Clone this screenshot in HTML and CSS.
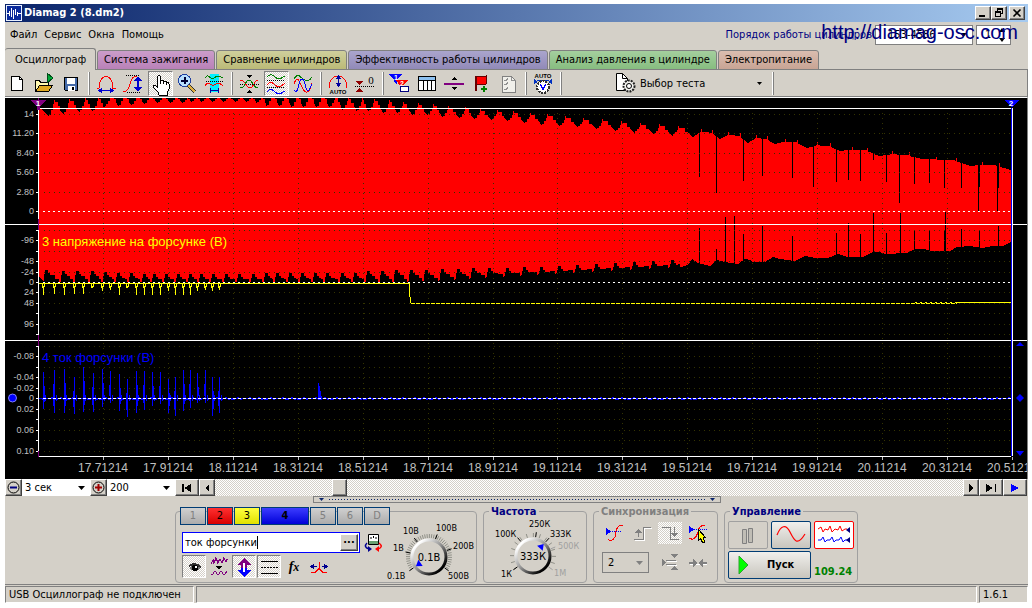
FILE: index.html
```html
<!DOCTYPE html>
<html lang="ru">
<head>
<meta charset="utf-8">
<title>Diamag 2 (8.dm2)</title>
<link rel="stylesheet" href="styles.css">
</head>
<body>
<div class="app">
  <header class="titlebar">
    <svg class="logo" viewBox="0 0 16 16" width="16" height="16"><rect width="16" height="16" fill="#e8f0ff"/><rect x="1" y="1" width="14" height="14" fill="#0a2a9c"/><path d="M1 8.500h2M3.500 6v5M5.500 3v9M7.500 5v9M9.500 4v6M11.500 7v4M12 8.500h3" fill="none" stroke="#fff"/></svg>
    <h1 class="title">Diamag 2 (8.dm2)</h1>
    <div class="winbuttons">
      <button class="win" aria-label="Свернуть"><svg viewBox="0 0 12 10" width="12" height="10"><path d="M2 7h6v2H2z"/></svg></button>
      <button class="win" aria-label="Восстановить"><svg viewBox="0 0 12 10" width="12" height="10"><path d="M4 0h6v6H8V5h1V2H5v1H4zM2 3h6v6H2zM3 5v3h4V5z" fill-rule="evenodd"/></svg></button>
      <button class="win win-close" aria-label="Закрыть"><svg viewBox="0 0 12 10" width="12" height="10"><path d="M2.500 1.500l7 7M9.500 1.500l-7 7" stroke="#000" stroke-width="1.600"/></svg></button>
    </div>
  </header>

  <div class="menurow">
    <nav class="menu"><button>Файл</button><button>Сервис</button><button>Окна</button><button>Помощь</button></nav>
    <div class="order">
      <label for="order">Порядок работы цилиндров</label>
      <span class="combo order-combo"><select id="order"><option>153-4586</option></select><svg viewBox="0 0 7 4" width="7" height="4"><path d="M0 0h7L3.500 4z"/></svg></span>
      <span class="combo spin"><input type="text" value="1" aria-label="Цилиндр"><svg viewBox="0 0 6 14" width="6" height="14"><path d="M3 0l3 4H0zM0 10h6l-3 4z"/></svg></span>
    </div>
    <span class="watermark">http://diamag-osc.com</span>
  </div>

  <div class="tabs" role="tablist">
    <button class="tab tab-active" role="tab">Осциллограф</button>
    <button class="tab tab-ignition" role="tab">Система зажигания</button>
    <button class="tab tab-compare" role="tab">Сравнение цилиндров</button>
    <button class="tab tab-power" role="tab">Эффективность работы цилиндров</button>
    <button class="tab tab-pressure" role="tab">Анализ давления в цилиндре</button>
    <button class="tab tab-supply" role="tab">Электропитание</button>
  </div>

  <div class="toolbar">
    <button class="tool" aria-label="Новый"><svg viewBox="0 0 24 24"><path d="M6.500 4.500h8l3 3v11h-11z" fill="#fff" stroke="#000"/><path d="M14.500 4.500v3h3" fill="none" stroke="#000"/></svg></button>
    <button class="tool" aria-label="Открыть"><svg viewBox="0 0 24 24"><path d="M3.500 19.500v-11h4l1 2h8v4" fill="#fff8b0" stroke="#000"/><path d="M3.500 19.500l4-6h13l-4 6z" fill="#e0a820" stroke="#000"/><path d="M15 1l6 5-6 5z" fill="#00a838" stroke="#004c18"/></svg></button>
    <button class="tool" aria-label="Сохранить"><svg viewBox="0 0 24 24"><path d="M5.500 5.500h13v13h-12l-1-1z" fill="#456aa8" stroke="#000"/><path d="M8 6h8v6H8zM9 14h7v5H9z" fill="#fff"/><path d="M13 15h2v3h-2z"/></svg></button>
    <i class="sep"></i>
    <button class="tool" aria-label="Период"><svg viewBox="0 0 24 24"><path d="M3 16.500h2C5 9 8 4.500 12 4.500s7 4.500 7 12h3" fill="none" stroke="red"/><path d="M6 18.500h12" stroke="#0000d0"/><path d="M4 18.500l4-3v6zM20 18.500l-4-3v6z" fill="#0000d0"/></svg></button>
    <button class="tool" aria-label="Амплитуда"><svg viewBox="0 0 24 24"><path d="M2 19.500c9 1 5-14 12-15 3 0 4 1 5 3" fill="none" stroke="red"/><path d="M5 3.500h14M6 20.500h14" stroke="#000" stroke-dasharray="1 1"/><path d="M17 8v9" stroke="#0000d0" stroke-width="2"/><path d="M17 4l4 5h-8zM17 20l4-5h-8z" fill="#0000d0"/></svg></button>
    <button class="tool pressed" aria-label="Рука"><svg viewBox="0 0 24 24"><path d="M9.500 15V5q1.500-3 3 0v7-3q1.500-1.500 3 0v3-2q1.500-1.500 3 0v3-2q2-1 2.500 1v5l-2 4v2h-8l-1-3-5-5q0-3 3-1z" fill="#fff" stroke="#000"/></svg></button>
    <button class="tool" aria-label="Масштаб"><svg viewBox="0 0 24 24"><path d="M13 13l7 7" stroke="#303030" stroke-width="4"/><path d="M13 13l7 7" stroke="#e0b040" stroke-width="2"/><circle cx="9.500" cy="8.500" r="6" fill="#b8e0ff" stroke="#2040a0"/><path d="M6 8.500h7M9.500 5v7" stroke="#003" stroke-width="2"/></svg></button>
    <button class="tool" aria-label="Участок"><svg viewBox="0 0 24 24"><path d="M8 2h9v18H8z" fill="#0ef"/><path d="M3 6c4-6 5 3 9 0s5-2 9 0" fill="none" stroke="#008000"/><path d="M4 9.500h17" stroke="#000" stroke-dasharray="1 1"/><path d="M3 14c4-7 6 1 9-1s5-3 9 1" fill="none" stroke="red"/><path d="M8 18.500h9M8.500 16v5M16.500 16v5" stroke="#0000a0"/></svg></button>
    <i class="sep"></i>
    <button class="tool" aria-label="Совместить"><svg viewBox="0 0 24 24"><path d="M9 3h6l-3 3zM9 21h6l-3-3z"/><path d="M3 12.500h19" stroke="#000" stroke-dasharray="1 1"/><path d="M3 8c6 0 6 8 10 8s3-7 8-8" fill="none" stroke="red"/><path d="M3 16c6 0 5-8 9-8s4 8 9 8" fill="none" stroke="#008000"/></svg></button>
    <button class="tool pressed" aria-label="Раздельно"><svg viewBox="0 0 24 24"><path d="M3 5c3-3 5-3 8 0s6 2 10-1" fill="none" stroke="#008000"/><path d="M3 8.500h18M3 15.500h18" stroke="#000" stroke-dasharray="1 1"/><path d="M3 13c3-4 5-3 8 0s6 2 10-2" fill="none" stroke="red"/><path d="M3 20c3-4 5-3 8 0s6 2 10-1" fill="none" stroke="#00f"/></svg></button>
    <button class="tool" aria-label="Наложить"><svg viewBox="0 0 24 24"><path d="M3 7c4-7 6-2 9 0s6 3 9-2" fill="none" stroke="#008000"/><path d="M3 12c3-9 5-4 8 3s7 8 10-4" fill="none" stroke="red"/><path d="M3 18c5 6 4-11 8-11s3 15 7 11l3-6" fill="none" stroke="#00f"/></svg></button>
    <i class="sep"></i>
    <button class="tool" aria-label="Авто"><svg viewBox="0 0 24 24"><path d="M3 16c0-16 18-16 18 0" fill="none" stroke="red"/><path d="M12.500 6v7" stroke="#0000a0"/><path d="M12.500 3l3 4h-6zM12.500 15l3-4h-6z" fill="#0000a0"/><text class="tiny" x="12" y="22">AUTO</text></svg></button>
    <button class="tool" aria-label="Ноль"><svg viewBox="0 0 24 24"><path d="M2 9h8l-4 4zM2 20h8l-4-4z" fill="#900000"/><path d="M2 14.500h19" stroke="#000" stroke-dasharray="1 1"/><text class="zero" x="18" y="12">0</text></svg></button>
    <i class="sep"></i>
    <button class="tool" aria-label="Маркеры"><svg viewBox="0 0 24 24"><path d="M1 2h13l-5 6v5l-3-3V8z" fill="#00f"/><path d="M8 8h12l-5 6v5l-2-4z" fill="red"/><text class="num" x="8" y="8">1</text><text class="num" x="14" y="14">2</text><path d="M12.500 14.500h8v5h-8z" fill="#fff" stroke="#000080"/></svg></button>
    <button class="tool" aria-label="Таблица"><svg viewBox="0 0 24 24"><path d="M3.500 4.500h17v14h-17z" fill="#fff" stroke="#000"/><path d="M4 5h16v3H4z" fill="#8cc0f0"/><path d="M3 8.500h18M8.500 8v10M12.500 8v10M16.500 8v10" stroke="#000"/></svg></button>
    <button class="tool" aria-label="Уровень"><svg viewBox="0 0 24 24"><path d="M9 8h6l-3-3zM9 15h6l-3 3z"/><path d="M2 12h20" stroke="#800080" stroke-width="2"/></svg></button>
    <button class="tool" aria-label="Добавить метку"><svg viewBox="0 0 24 24"><path d="M6.500 4v15" stroke="#600" stroke-width="2"/><path d="M7 5l4-1 3 1 3-1v8l-3 1-3-1-4 1z" fill="#f00" stroke="#600"/><path d="M15 14v6M12 17h6" stroke="#008000" stroke-width="2"/></svg></button>
    <button class="tool" aria-label="Список"><svg viewBox="0 0 24 24"><path d="M6.500 4.500h9l4 4v12h-13z" fill="#f0efea" stroke="#808080"/><path d="M15.500 4.500v4h4M8 8l2 1 2-3M8 12l2 1 2-3M8 17l2 1 2-3" fill="none" stroke="#909090"/></svg></button>
    <i class="sep"></i>
    <button class="tool" aria-label="Авто напряжение"><svg viewBox="0 0 24 24"><text class="tiny" x="12" y="6">AUTO</text><path d="M6 8.500h12" fill="none" stroke="#0030c0"/><path d="M3 7v5l4-2zM21 7v5l-4-2z" fill="#0030c0"/><circle cx="12" cy="15" r="6" fill="#fff" stroke="#303030" stroke-width="2" stroke-dasharray="2 1"/><path d="M9.500 12.500l2.500 5 2.500-5" fill="none" stroke="#00f"/></svg></button>
    <i class="sep"></i>
    <button class="testpick"><svg viewBox="0 0 24 24" width="24" height="24"><path d="M3.500 1.500h6l5 5v12h-11z" fill="#fff" stroke="#000"/><path d="M9.500 1.500v5h5" fill="none" stroke="#000"/><circle cx="16" cy="14" r="5.500" fill="#f4f4f0" stroke="#202020" stroke-width="2" stroke-dasharray="2 1"/><circle cx="16" cy="14" r="2.500" fill="#fff" stroke="#000"/></svg><span>Выбор теста</span><svg viewBox="0 0 5 3" width="5" height="3"><path d="M0 0h5L2.500 3z"/></svg></button>
    <i class="sep"></i>
  </div>

  <svg class="chart" id="chart" viewBox="5 98 1022 381" role="img" aria-label="Осциллограмма"></svg>

  <div class="scrollrow">
    <button class="sb sb-zoom" aria-label="Сжать"><svg class="smooth" viewBox="0 0 13 13" width="13" height="13"><circle cx="6.500" cy="6.500" r="5.500" fill="none" stroke="#000"/><path d="M3 6.500h7" stroke="#000080" stroke-width="2"/></svg></button>
    <span class="combo sweep"><select aria-label="Развёртка"><option>3 сек</option></select><svg viewBox="0 0 7 4" width="7" height="4"><path d="M0 0h7L3.500 4z"/></svg></span>
    <button class="sb sb-zoom" aria-label="Растянуть"><svg class="smooth" viewBox="0 0 13 13" width="13" height="13"><circle cx="6.500" cy="6.500" r="5.500" fill="none" stroke="#000"/><path d="M3 6.500h7M6.500 3v7" stroke="#a00000" stroke-width="2"/></svg></button>
    <span class="combo sweep"><select aria-label="Масштаб"><option>200</option></select><svg viewBox="0 0 7 4" width="7" height="4"><path d="M0 0h7L3.500 4z"/></svg></span>
    <button class="sb sb-wide" aria-label="В начало"><svg viewBox="0 0 12 8" width="12" height="8"><path d="M1 0h2v8H1zM3 4l7-4v8z"/></svg></button>
    <button class="sb" aria-label="Назад"><svg viewBox="0 0 4 8" width="4" height="8"><path d="M4 0v8L0 4z"/></svg></button>
    <input class="scroll" type="range" min="0" max="100" value="16" aria-label="Прокрутка">
    <button class="sb" aria-label="Вперёд"><svg viewBox="0 0 4 8" width="4" height="8"><path d="M0 0v8l4-4z"/></svg></button>
    <button class="sb sb-wide" aria-label="В конец"><svg viewBox="0 0 12 8" width="12" height="8"><path d="M10 0h1v8h-1zM8 4L1 0v8z"/></svg></button>
    <button class="sb sb-wide" aria-label="Воспроизвести"><svg viewBox="0 0 8 8" width="8" height="8"><path d="M0 0v8l8-4z" fill="#00f"/></svg></button>
  </div>

  <button class="splitter" aria-label="Свернуть панель"><svg viewBox="0 0 5 3" width="5" height="3"><path d="M0 0h5L2.500 3z" fill="#0a246a"/></svg><i class="dots"></i><svg viewBox="0 0 5 3" width="5" height="3"><path d="M0 0h5L2.500 3z" fill="#0a246a"/></svg></button>

  <div class="panel">
    <fieldset class="group channels" aria-label="Канал">
      <div class="chanrow">
        <button class="chan">1</button><button class="chan chan-red">2</button><button class="chan chan-yellow">3</button><button class="chan chan-blue">4</button><button class="chan">5</button><button class="chan">6</button><button class="chan">D</button>
      </div>
      <div class="chanbody">
        <div class="chanleft">
          <div class="namerow">
            <span class="namebox"><input type="text" value="ток форсунки" aria-label="Название канала"><i class="caret"></i><button class="more" aria-label="Выбрать">···</button></span>
            <button class="flat" aria-label="Датчик"><svg viewBox="0 0 20 20" width="20" height="20"><path d="M5.500 1.500h10v10h-10z" fill="#fff" stroke="#000"/><path d="M6 8h9v3H6z" fill="#68a070"/><path d="M8 6V4M10.500 5V3M13 6V4" stroke="#000"/><path d="M4 10q-4 4 2 6" fill="none" stroke="#000090" stroke-width="1.500"/><path d="M5 13v6l4-3z" fill="#000090"/><path d="M16 10q5 4-1 6" fill="none" stroke="red" stroke-width="1.500"/><path d="M16 13v6l-4-3z" fill="red"/></svg></button>
          </div>
          <div class="togglerow">
            <button class="toggle pressed" aria-label="Показать"><svg viewBox="0 0 24 22"><path d="M7 12q6-6 12 0-5 6-12 0z" fill="#777"/><path d="M7 10q6-4 12 1" fill="none" stroke="#303030" stroke-width="2"/><circle cx="13" cy="12" r="3"/><circle cx="14" cy="11" r="1" fill="#fff"/></svg></button>
            <button class="toggle" aria-label="Сглаживание"><svg viewBox="0 0 24 22"><path d="M4 8l2-4 1 3 2-5 2 5 2-4 2 4 2-5 2 4 1-3" fill="none" stroke="#800080" stroke-width="1.300"/><path d="M9 10h6l-3 4z"/><path d="M4 18h2q2-5 4 0h2q2-5 4 0h2q1-4 2-1" fill="none" stroke="#800080"/></svg></button>
            <button class="toggle pressed" aria-label="Инверсия"><svg viewBox="0 0 24 22"><path d="M12 2l7 7h-4v3H9V9H5z" fill="#800080"/><path d="M12 21l7-7h-4v-2H9v2H5z" fill="#00f"/><path d="M12 7v9" stroke="#fff" stroke-width="2"/></svg></button>
            <button class="toggle pressed" aria-label="Смещение"><svg viewBox="0 0 24 22"><path d="M4 5.500h17M4 17.500h17" stroke="#000"/><path d="M4 11.500h17" stroke="#000" stroke-dasharray="2 1"/></svg></button>
            <button class="toggle fx" aria-label="Функция"><i>f<small>x</small></i></button>
            <button class="toggle" aria-label="Фильтр"><svg viewBox="0 0 24 22"><path d="M4 16.500h4l2-2 2-2V6v6.500l2 2 2 2h4" fill="none" stroke="red"/><path d="M6 10.500h4M15 10.500h4" stroke="#000090"/><path d="M3 10.500l4-3v6zM21 10.500l-4-3v6z" fill="#000090"/></svg></button>
          </div>
        </div>
        <svg class="dial dial-volt" id="dial-volt" viewBox="386 520 92 61" width="92" height="61" role="img" aria-label="Диапазон 0.1В"></svg>
      </div>
    </fieldset>

    <fieldset class="group freq">
      <legend>Частота</legend>
      <svg class="dial" id="dial-freq" viewBox="484 517 102 64" width="102" height="64" role="img" aria-label="Частота 333К"></svg>
    </fieldset>

    <fieldset class="group sync">
      <legend class="legend-off">Синхронизация</legend>
      <div class="syncgrid">
        <button class="sync-btn" aria-label="Уровень"><svg viewBox="0 0 24 22"><path d="M6 17q3 4 7-2l1-6q2-7 7-5" fill="none" stroke="red"/><path d="M6 9.500h14" stroke="#00f" stroke-dasharray="1 1"/><path d="M4 6l5 3.500L4 13z" fill="#00f"/></svg></button>
        <button class="sync-btn" aria-label="Фронт"><svg viewBox="0 0 24 22"><path d="M5 18.500h9v-12h8" fill="none" stroke="#fff"/><path d="M4 17.500h9v-12h8M8.500 8v7" fill="none" stroke="#808080"/><path d="M5 11h7L8.500 7z" fill="#808080"/></svg></button>
        <button class="sync-btn checked" aria-label="Спад"><svg viewBox="0 0 24 22"><path d="M4 5.500h8v12h9M16.500 5v8" fill="none" stroke="#808080"/><path d="M13 11h7l-3.500 4z" fill="#808080"/></svg></button>
        <button class="sync-btn" aria-label="Указать"><svg viewBox="0 0 24 22"><path d="M3 16q6 4 9-6 1-7 7-7" fill="none" stroke="red"/><path d="M6 7.500h15" stroke="#00f" stroke-dasharray="1 1"/><path d="M3 4l5 3.500L3 11z" fill="#00f"/><path d="M12.500 7.500v11l2-2 2 4h2l-1-5h2z" fill="#ff0" stroke="#000"/></svg></button>
        <span class="combo sync-combo"><select aria-label="Канал синхронизации"><option>2</option></select><svg viewBox="0 0 7 4" width="7" height="4"><path d="M0 0h7L3.500 4z" fill="#808080"/></svg></span>
        <button class="sync-btn" aria-label="Гистерезис"><svg viewBox="0 0 24 22"><path d="M9 9.500h10M9 13.500h10" stroke="#fff"/><path d="M8 8.500h10M8 12.500h10" stroke="#808080"/><path d="M13 2h7l-3.500 4zM13 18h7l-3.500-4zM4 7l4 3.500L4 14z" fill="#808080"/></svg></button>
        <button class="sync-btn" aria-label="Центр"><svg viewBox="0 0 24 22"><path d="M4 12.500h17" stroke="#fff"/><path d="M3 11h6M15 11h6" stroke="#808080" stroke-width="2"/><path d="M7 7l5 4-5 4zM17 7l-5 4 5 4z" fill="#808080"/></svg></button>
      </div>
    </fieldset>

    <fieldset class="group control">
      <legend>Управление</legend>
      <div class="ctlgrid">
        <button class="ctl ctl-off" aria-label="Пауза"><svg viewBox="0 0 40 28"><path d="M14.500 8.500h4v14h-4zM20.500 7.500h4v14h-4z" fill="#c0bdb5" stroke="#808080"/></svg></button>
        <button class="ctl" aria-label="Один сигнал"><svg viewBox="0 0 40 28"><path d="M6 14C10 4 15 3 19 11s7 15 15 2" fill="none" stroke="red" stroke-width="1.200"/></svg></button>
        <button class="ctl ctl-on" aria-label="Два сигнала"><svg viewBox="0 0 40 28"><path d="M4 8l3-2 2 5 2-3 3 1 2-4 2 6 3-3 3 1 2-4 2 5 3-2h2" fill="none" stroke="red"/><path d="M4 19h3l2-3 2 5 2-2h3l2-3 2 5 2-2h3l2-3 2 5 2-2h2" fill="none" stroke="#00f"/><path d="M36 6v6l-4-3zM36 16v6l-4-3z" fill="#000080"/></svg></button>
        <button class="ctl run"><svg viewBox="0 0 12 20" width="12" height="20"><path d="M1 1v18l9-9z" fill="#0f0" stroke="#30a030"/></svg><span>Пуск</span></button>
        <output class="counter">109.24</output>
      </div>
    </fieldset>
  </div>

  <footer class="status">
    <span class="cell cell-device">USB Осциллограф не подключен</span>
    <span class="cell cell-fill"></span>
    <span class="cell cell-version">1.6.1</span>
  </footer>
</div>
<script src="chart.js"></script>
</body>
</html>
```

FILE: styles.css
```css
* { box-sizing: border-box; }

body {
  margin: 0;
  padding: 4px 4px 5px 5px;
  background: #fff;
  color: #000;
  font: 11px/14px "DejaVu Sans Condensed", "DejaVu Sans", sans-serif;
}

button, input, select {
  margin: 0;
  padding: 0;
  border: 0;
  background: none;
  color: inherit;
  font: inherit;
}

select { appearance: none; }
svg { display: block; }

.app {
  display: flex;
  flex-direction: column;
  background: #d4d0c8;
}

.titlebar {
  display: flex;
  align-items: center;
  gap: 2px;
  height: 18px;
  padding: 0 3px 0 1px;
  background: linear-gradient(90deg, #0a246a, #a6caf0);
}

.title {
  flex: 1;
  margin: 0;
  color: #fff;
  font-size: 11px;
  line-height: 18px;
}

.winbuttons { display: flex; }

.win, .sb, .more {
  display: flex;
  align-items: center;
  justify-content: center;
  border: 1px solid;
  border-color: #fff #404040 #404040 #fff;
  box-shadow: inset -1px -1px #808080;
  background: #d4d0c8;
}

.win { width: 16px; height: 14px; }
.win-close { margin-left: 2px; }

.menurow {
  position: relative;
  display: flex;
  align-items: center;
  justify-content: space-between;
  height: 26px;
  padding: 0 17px 0 5px;
}

.menu { display: flex; gap: 7px; }

.order {
  display: flex;
  align-items: center;
  gap: 3px;
  color: #000080;
}

.combo {
  display: flex;
  align-items: center;
  padding: 0 5px;
  background: #fff;
  color: #000;
}

.combo select, .combo input { flex: 1; min-width: 0; }
.order-combo { width: 98px; height: 20px; padding-left: 12px; border: 1px solid #808080; }
.spin { width: 35px; height: 20px; padding-left: 8px; border: 1px solid #808080; }

.watermark {
  position: absolute;
  top: 0;
  right: 10px;
  color: #000080;
  font: 20px/20px "Liberation Sans", sans-serif;
}

.tabs {
  display: flex;
  align-items: flex-end;
  gap: 1px;
  height: 22px;
  box-shadow: inset 0 -1px #808080;
}

.tab {
  height: 20px;
  padding: 0 6px;
  border: 1px solid #808080;
  border-radius: 3px 3px 0 0;
  line-height: 18px;
  white-space: nowrap;
}

.tab-active {
  height: 22px;
  padding: 0 9px 0 10px;
  border-left: 0;
  border-bottom: 0;
  background: #d4d0c8;
  line-height: 20px;
}

.tab-ignition { background: linear-gradient(#cb9cca, #b981b8); }
.tab-compare { background: linear-gradient(#cfcf9c, #bbba77); }
.tab-power { background: linear-gradient(#aaa5cd, #918ab8); }
.tab-pressure { background: linear-gradient(#a4cf9e, #87bd80); }
.tab-supply { background: linear-gradient(#dabdaf, #c8a494); }

.toolbar {
  display: flex;
  align-items: center;
  gap: 2px;
  height: 28px;
  border-right: 1px solid #808080;
  border-bottom: 1px solid #fff;
  box-shadow: inset 0 -1px #808080;
}

.tool { width: 25px; height: 25px; }
.tool svg { width: 24px; height: 24px; }
.tool svg, .toggle svg, .sync-btn svg, .sb svg { shape-rendering: crispEdges; }
.sb .smooth { shape-rendering: auto; }

.pressed {
  border: 1px solid;
  border-color: #808080 #fff #fff #808080;
  background: repeating-conic-gradient(#fff 0 25%, #d4d0c8 0 50%) 0 0 / 2px 2px;
}

.pressed svg { margin: -1px; }

.sep {
  width: 2px;
  height: 23px;
  margin: 0 2px;
  border-left: 1px solid #fff;
  background: #808080;
}

.tiny { font: bold 6px "Liberation Sans", sans-serif; text-anchor: middle; }
.zero { font: 11px "Liberation Serif", serif; text-anchor: middle; }
.num { font: bold 7px "Liberation Sans", sans-serif; text-anchor: middle; fill: #fff; }

.testpick {
  display: flex;
  align-items: center;
  gap: 3px;
  width: 202px;
  height: 24px;
  padding: 0 6px 0 47px;
  text-align: left;
}

.testpick span { flex: 1; }

.chart {
  width: 100%;
  height: auto;
  border-right: 1px solid #808080;
  background: #000;
}

.axis { font: 9px "Liberation Sans", sans-serif; fill: #c0c0c0; text-anchor: end; }
.time { font: 12px "Liberation Sans", sans-serif; fill: #c0c0c0; text-anchor: middle; }
.trace-name { font: 13px "Liberation Sans", sans-serif; }
.mark { font: bold 8px "Liberation Sans", sans-serif; fill: #fff; text-anchor: middle; }

.scrollrow {
  display: flex;
  height: 17px;
  margin-right: 1px;
}

.sb { width: 16px; }
.sb-wide { width: 24px; }
.sb-zoom { width: 17px; }
.sweep { width: 68px; padding-left: 3px; }

.scroll {
  flex: 1;
  min-width: 0;
  appearance: none;
  background: repeating-conic-gradient(#fff 0 25%, #d4d0c8 0 50%) 0 0 / 2px 2px;
}

.scroll::-webkit-slider-thumb {
  appearance: none;
  width: 15px;
  height: 17px;
  border: 1px solid;
  border-color: #fff #404040 #404040 #fff;
  box-shadow: inset -1px -1px #808080;
  background: #d4d0c8;
}

.splitter {
  display: flex;
  align-items: center;
  align-self: center;
  gap: 5px;
  width: 408px;
  height: 7px;
  padding: 0 5px;
  border: 1px solid #808080;
}

.dots { flex: 1; height: 1px; background: repeating-linear-gradient(90deg, #0a246a 0 1px, transparent 1px 3px); }

.panel {
  display: flex;
  align-items: flex-end;
  justify-content: center;
  gap: 6px;
  padding: 3px 0 1px;
}

.group {
  height: 77px;
  min-width: 0;
  margin: 0;
  padding: 0;
  border: 1px solid #a0a0a0;
  border-radius: 4px;
}

.group legend {
  height: 10px;
  margin-left: 5px;
  padding: 0 2px;
  color: #000080;
  font-weight: bold;
  line-height: 12px;
}

.group .legend-off { color: #808080; }

.channels { width: 302px; height: 72px; }
.freq { width: 104px; }
.sync { width: 125px; }
.control { width: 134px; }

.chanrow {
  display: flex;
  gap: 1px;
  margin: -5px 0 0 4px;
}

.chan {
  width: 26px;
  height: 18px;
  border: 1px solid #003c74;
  background: linear-gradient(#d0d0d0, #acacac);
  color: #808080;
  line-height: 16px;
}

.chan-red { background: linear-gradient(#ff3030, #d80000); color: #000; }
.chan-yellow { background: linear-gradient(#ffff40, #e0e000); color: #000; }
.chan-blue { width: 48px; background: linear-gradient(#3c3cff, #0000d8); color: #000; font-weight: bold; }

.chanbody { display: flex; justify-content: space-between; }
.chanleft { padding: 7px 0 0 6px; }
.namerow { display: flex; align-items: center; gap: 3px; }

.namebox {
  display: flex;
  align-items: center;
  width: 178px;
  height: 21px;
  padding: 0 1px 0 2px;
  border: 1px solid #00f;
  background: #fff;
}

.namebox input { width: 72px; }
.caret { width: 1px; height: 13px; margin-right: auto; background: #000; }
.more { width: 18px; height: 17px; font-weight: bold; }
.togglerow { display: flex; gap: 1px; padding-top: 2px; }
.toggle { width: 24px; height: 23px; }
.toggle svg { width: 24px; height: 22px; }
.fx { font: bold 14px/22px "Liberation Serif", serif; }
.fx small { font-size: 12px; }

.dial { overflow: visible; }
.dial-volt { margin-top: -5px; }
.scale { font: 9px "DejaVu Sans Condensed", "DejaVu Sans", sans-serif; }
.reading { font: 11px "DejaVu Sans Condensed", "DejaVu Sans", sans-serif; text-anchor: middle; }

.syncgrid {
  display: grid;
  grid-template-columns: repeat(4, 24px);
  gap: 8px 4px;
  padding: 6px 0 0 8px;
}

.sync-btn { height: 22px; }
.sync-btn svg { width: 24px; height: 22px; }
.checked { background: repeating-conic-gradient(#fff 0 25%, #d4d0c8 0 50%) 0 0 / 2px 2px; }

.sync-combo {
  grid-column: span 2;
  width: 47px;
  height: 21px;
  border: 1px solid #808080;
  background: #d4d0c8;
}

.ctlgrid {
  display: grid;
  grid-template-columns: repeat(3, 40px);
  gap: 2px 3px;
  padding: 5px 0 0 3px;
}

.ctl {
  height: 28px;
  border: 1px solid #003c74;
  border-radius: 2px;
  background: linear-gradient(#f0efec, #c8c5bd);
}

.ctl-off { border-color: #a0a0a0; background: #d4d0c8; }
.ctl-on { border-color: red; background: #fff; }
.ctl > svg { margin: -1px; }

.run {
  display: flex;
  grid-column: span 2;
  align-items: center;
  gap: 18px;
  padding-left: 10px;
  font-weight: bold;
}

.counter {
  align-self: end;
  color: #008000;
  font-weight: bold;
  line-height: 14px;
}

.status {
  display: flex;
  gap: 2px;
  height: 19px;
  border-top: 1px solid #808080;
  padding-top: 1px;
}

.cell {
  height: 17px;
  padding: 0 3px;
  border: 1px solid;
  border-color: #808080 #fff #fff #808080;
  line-height: 16px;
  white-space: nowrap;
}

.cell-device { width: 189px; }
.cell-fill { flex: 1; }
.cell-version { width: 49px; }
```

FILE: chart.js
```javascript
(function () {
const NS = "http://www.w3.org/2000/svg";

function add(parent, name, attrs, text) {
  const node = document.createElementNS(NS, name);
  for (const key in attrs) node.setAttribute(key, attrs[key]);
  if (text !== undefined) node.textContent = text;
  parent.appendChild(node);
  return node;
}

const chart = document.getElementById("chart");
const shapes = add(chart, "g", { "shape-rendering": "crispEdges" });
const LEFT = 39, RIGHT = 1011;

function seg(d, color, extra) {
  add(shapes, "path", Object.assign({ d, stroke: color, fill: "none" }, extra));
}

/* Envelope of channel 2: [x, y] turning points of its upper and lower edge. */
const dips = [[49, 117], [64, 114], [80, 112], [93, 112], [106, 106], [119, 107], [132, 106], [145, 105], [158, 104], [171, 104], [183, 104], [192, 103], [202, 103], [213, 103], [224, 103], [236, 103], [247, 103], [257, 104], [267, 107], [280, 107], [292, 108], [304, 108], [317, 108], [330, 108], [343, 111], [357, 112], [369, 112], [384, 114], [398, 114], [413, 116], [428, 116], [443, 118], [460, 119], [475, 120], [492, 121], [508, 122], [525, 124], [542, 126], [560, 127], [578, 128], [597, 130], [616, 132], [635, 133], [654, 135], [673, 136], [693, 137], [720, 139], [748, 143], [775, 144], [807, 148], [840, 151], [879, 156], [922, 159], [970, 166], [1011, 170]];
const crest = x => x < 330 ? 95 : x < 700 ? 97 + (x - 330) * 0.088 : 130 + (x - 700) * 0.116;

let upper = `M${LEFT} 224V106L42 110L45 112`;
dips.forEach(([x, y], i) => {
  upper += `L${x} ${y}`;
  const next = dips[i + 1];
  if (!next) return;
  const step = next[0] - x, c = x < 100 ? 102 - i : crest(x + step / 2);
  if (x < 690) {
    const r = Math.round(c), mid = Math.round((y + c) / 2);
    upper += `V${y - 2}H${x + 2}V${mid}H${x + 4}V${r + 2}H${x + 5}V${r - 2}H${x + 6}V${r}H${x + Math.round(step * 0.6)}V${r + 4}H${x + Math.round(step * 0.75)}V${mid + 1}`;
  } else {
    upper += `L${x + step * 0.3} ${c + 1}V${c - 2}h1v3L${x + step * 0.7} ${c + 2}v-3h1v4`;
  }
});
add(shapes, "path", { d: upper + "V224Z", fill: "red" });

const teeth = [[47, 270], [64, 271], [78, 271], [93, 271], [106, 272], [119, 273], [132, 273], [145, 274], [155, 274], [167, 274], [179, 274], [191, 274], [202, 274], [214, 274], [227, 274], [240, 274], [254, 274], [267, 273], [278, 273], [291, 273], [303, 273], [316, 273], [328, 273], [343, 273], [356, 273], [369, 271], [383, 271], [397, 270], [412, 270], [427, 270], [443, 269], [459, 269], [474, 268], [490, 268], [508, 268], [525, 267], [542, 267], [560, 266], [578, 265], [597, 264], [616, 263], [635, 262], [654, 261], [673, 260]];
let low = `M${LEFT} 224V276`;
teeth.forEach(([x, y], i) => {
  const base = Math.round(x < 400 ? 282 : 282 - (x - 400) * 0.055);
  const step = i + 1 < teeth.length ? teeth[i + 1][0] - x : 12;
  low += `L${x - 3} ${base}V${y + 4}H${x - 2}V${y}H${x + 1}V${y + 3}H${x + 3}V${y + 5}H${x + Math.round(step * 0.45)}V${base - 3}H${x + step - 5}V${base}`;
});
const lowTail = [[681, 267], [688, 265], [692, 259], [698, 263], [710, 266], [717, 260], [725, 262], [738, 264], [745, 259], [750, 260], [753, 262], [765, 262], [773, 257], [780, 259], [795, 261], [805, 256], [815, 258], [828, 258], [838, 254], [848, 257], [863, 257], [873, 252], [880, 252], [885, 254], [907, 253], [915, 249], [924, 249], [930, 251], [950, 251], [957, 247], [970, 246], [982, 248], [992, 246], [1003, 246], [1011, 242]];
low += lowTail.map(([x, y]) => `L${x} ${y}`).join("");
add(shapes, "path", { d: low + "V224Z", fill: "red" });

/* Gaps in the fill: [x, bottom of the upper gap, top of the lower gap]; 0 where there is none. */
const gaps = [[699, 177, 228], [716, 193, 249], [725, 0, 217], [734, 0, 216], [743, 181, 234], [762, 176, 226], [792, 178, 236], [813, 187, 0], [836, 182, 233], [848, 180, 223], [860, 181, 234], [873, 160, 213], [886, 182, 233], [899, 203, 0], [900, 0, 213], [914, 184, 230], [929, 183, 230], [944, 188, 230], [945, 0, 212], [961, 188, 229], [978, 211, 0], [979, 187, 230], [997, 211, 0], [998, 188, 226]];
gaps.forEach(([x, a, b]) => {
  const topY = Math.round(127 + (x - 700) * 0.115);
  if (a) seg(`M${x + 0.5} ${topY}V${a}`, "#000");
  if (b) seg(`M${x + 0.5} ${b}V266`, "#000");
});

/* Grid */
const rows = [114, 133, 153, 172, 192, 230, 240, 251, 261, 272, 292, 303, 313, 324, 334, 346, 356, 367, 377, 388, 409, 419, 430, 440, 451];
const cols = [103, 168, 233, 298, 363, 428, 493, 557, 622, 687, 752, 817, 882, 947];
rows.forEach(y => seg(`M44 ${y + 0.5}H${RIGHT}`, "#343400", { "stroke-dasharray": "1 4" }));
cols.forEach(x => seg(`M${x + 0.5} 113V456`, "#343400", { "stroke-dasharray": "1 4" }));

/* Channel 3: injector voltage */
const pulses = [[43, 295], [54, 294], [64, 295], [74, 294], [83, 294], [92, 288], [102, 291], [110, 290], [119, 295], [127, 288], [136, 295], [144, 295], [152, 295], [160, 295], [168, 291], [175, 295], [183, 295], [190, 295], [197, 291], [205, 290], [212, 291], [219, 290]];
seg(`M${LEFT} 283.5H409.5V291L410.5 303`, "#ff0");
pulses.forEach(([x, y]) => seg(`M${x - 0.5} 284V288M${x + 1.5} 284V287M${x + 0.5} 286V${y}`, "#ff0"));
seg("M411 303.5H957", "#ff0", { "stroke-dasharray": "4 1" });
seg("M915 302.5H957", "#ff0", { "stroke-dasharray": "2 3" });
seg(`M957 302.5H${RIGHT}`, "#ff0");

/* Channel 4: injector current */
const spikes = [[43, 372, 409], [54, 370, 413], [64, 369, 413], [74, 377, 414], [83, 367, 412], [93, 373, 412], [102, 369, 407], [110, 371, 403], [119, 374, 411], [127, 379, 417], [136, 371, 413], [144, 371, 410], [152, 372, 406], [160, 372, 404], [168, 379, 413], [175, 377, 416], [183, 370, 411], [190, 370, 408], [197, 373, 403], [205, 370, 403], [212, 377, 416], [219, 377, 413]];
seg(`M${LEFT} 398.5H${RIGHT}`, "#00f");
spikes.forEach(([x, a, b], i) => {
  const side = i % 2 ? -0.5 : 1.5;
  seg(`M${x + 0.5} ${a}V${b}M${x + side} ${a + 14}V${b - 7}M${x + 2.5} 395V401`, "#00f");
});
add(shapes, "path", { d: "M318 398V383H319L322 398Z", fill: "#00f" });
for (let x = 42; x < RIGHT; x += 3) {
  const h = (x * 7919) % 11;
  if (h < 7) seg(`M${x} ${h < 4 ? 399 : 397}.5h${h < 2 ? 4 : 2}`, "#00f");
}

/* Zero lines, frames, ticks */
[211, 282, 398].forEach(y => seg(`M43 ${y + 0.5}H${RIGHT}`, "#fff", { "stroke-dasharray": y === 398 ? "3 2" : "2 3" }));
seg("M38 108.5H1011M5 224.5H1027M5 340.5H1027M38 456.5H1011M38.5 108V456M1012.5 108V456", "#fff");
seg("M38.5 98V110M38.5 219V230M38.5 335V346M38.5 451V457", "#800080");
seg("M1011.5 108V456", "#00f");
rows.concat([211, 282, 398]).forEach(y => seg(`M36 ${y + 0.5}H38`, "#fff"));
cols.concat([1012]).forEach(x => seg(`M${x + 0.5} 457V460`, "#c0c0c0"));

/* Markers and handles */
add(shapes, "path", { d: "M31 100H46L40 107V110H37V107Z", fill: "#800080" });
add(shapes, "path", { d: "M1004 100H1019L1012 107Z", fill: "#00f" });
add(chart, "text", { class: "mark", x: 38, y: 106 }, "1");
add(chart, "text", { class: "mark", x: 1011, y: 106 }, "2");
add(chart, "circle", { cx: 12.5, cy: 398, r: 4, fill: "#00f", stroke: "#8080ff" });
add(chart, "path", { d: "M1016 346h8l-4-4zM1016 451h8l-4 5zM1016 398l4-4 4 4-4 4z", fill: "#00f" });

/* Labels */
[[114, "14"], [133, "11.20"], [153, "8.40"], [172, "5.60"], [192, "2.80"], [211, "0"], [240, "-96"], [261, "-48"], [272, "-24"], [282, "0"], [292, "24"], [303, "48"], [324, "96"], [356, "-0.08"], [377, "-0.04"], [388, "-0.02"], [398, "0"], [409, "0.02"], [430, "0.06"], [451, "0.10"]]
  .forEach(([y, label]) => add(chart, "text", { class: "axis", x: 34, y: y + 3 }, label));
cols.concat([1012]).forEach((x, i) => add(chart, "text", { class: "time", x, y: 472 }, (17.71214 + i * 0.2).toFixed(5)));
add(chart, "text", { class: "trace-name", x: 42, y: 246, fill: "#ff0" }, "3 напряжение на форсунке (В)");
add(chart, "text", { class: "trace-name", x: 42, y: 362, fill: "#00f" }, "4 ток форсунки (В)");

/* Rotary knobs */
function dial(id, cx, cy, fine, labels, reading, angle) {
  const svg = document.getElementById(id);
  const defs = add(svg, "defs", {});
  const grad = add(defs, "linearGradient", { id: id + "-rim", x1: 0.15, y1: 0.15, x2: 0.85, y2: 0.85 });
  add(grad, "stop", { offset: 0, "stop-color": "#fff" });
  add(grad, "stop", { offset: 0.5, "stop-color": "#909090" });
  add(grad, "stop", { offset: 1, "stop-color": "#000" });
  const at = (deg, r) => {
    const rad = deg * Math.PI / 180;
    return `${cx + r * Math.cos(rad)} ${cy + r * Math.sin(rad)}`;
  };
  for (let deg = 145; deg <= 395; deg += fine) {
    add(svg, "path", { d: `M${at(deg, 19)}L${at(deg, 23)}`, stroke: "#909088" });
  }
  labels.forEach(([text, x, y, deg, off]) => {
    const color = off ? "#a0a0a0" : "#000";
    add(svg, "path", { d: `M${at(deg, 19)}L${at(deg, 24)}`, stroke: color });
    add(svg, "text", { class: "scale", x, y, fill: color }, text);
  });
  add(svg, "circle", { cx, cy, r: 17, fill: "#d4d0c8", stroke: `url(#${id}-rim)`, "stroke-width": 3 });
  add(svg, "path", { d: `M${at(angle, 16)}L${at(angle + 20, 11)}L${at(angle - 20, 11)}Z`, fill: "#00f" });
  add(svg, "text", { class: "reading", x: cx, y: cy + 4 }, reading);
}

dial("dial-volt", 431, 557, 6, [["0.1В", 389, 579, 145], ["1В", 395, 551, 192], ["10В", 405, 534, 232], ["100В", 438, 531, 290], ["200В", 455, 549, 340], ["500В", 450, 579, 35]], "0.1В", 145);
dial("dial-freq", 533, 557, 18, [["1К", 501, 578, 145], ["100К", 495, 538, 230], ["250К", 529, 528, 278], ["333К", 550, 538, 312], ["500К", 558, 550, 338, true], ["1М", 554, 577, 35, true]], "333К", 312);
})();
```
